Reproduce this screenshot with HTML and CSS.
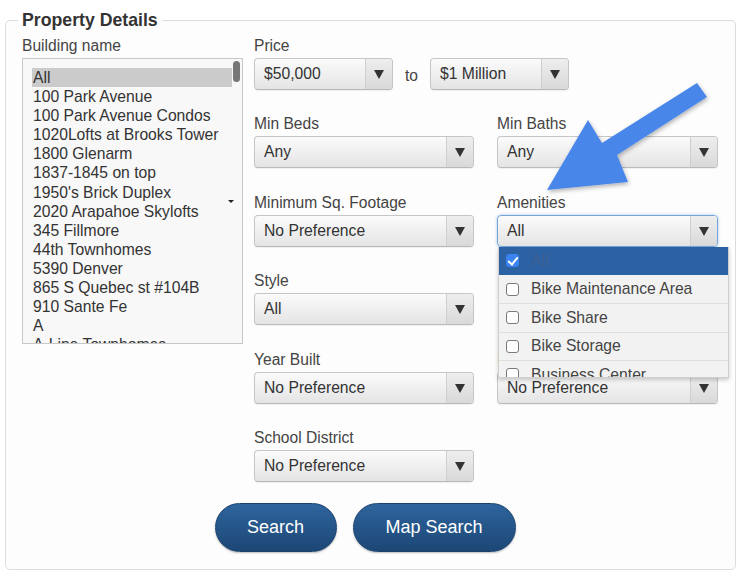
FILE: index.html
```html
<!DOCTYPE html>
<html lang="en">
<head>
    <meta charset="UTF-8">
    <meta name="viewport" content="width=device-width, initial-scale=1.0">
    <title>Property Search</title>
    <link rel="stylesheet" href="styles.css">
</head>
<body>
    <form class="search-form">
        <fieldset class="details">
            <legend>Property Details</legend>
            <div class="details-body">
                <div class="field building">
                    <label>Building name</label>
                    <div class="listbox">
                        <ul class="listbox-items">
                            <li class="selected">All</li>
                            <li>100 Park Avenue</li>
                            <li>100 Park Avenue Condos</li>
                            <li>1020Lofts at Brooks Tower</li>
                            <li>1800 Glenarm</li>
                            <li>1837-1845 on top</li>
                            <li>1950's Brick Duplex</li>
                            <li>2020 Arapahoe Skylofts</li>
                            <li>345 Fillmore</li>
                            <li>44th Townhomes</li>
                            <li>5390 Denver</li>
                            <li>865 S Quebec st #104B</li>
                            <li>910 Sante Fe</li>
                            <li>A</li>
                            <li>A-Line Townhomes</li>
                        </ul>
                        <span class="scroll-thumb"></span>
                        <span class="cursor-caret"></span>
                    </div>
                </div>

                <div class="field-grid">
                    <div class="field price">
                        <label>Price</label>
                        <div class="price-range">
                            <div class="select price-select"><span class="select-value">$50,000</span><span class="select-caret"></span></div>
                            <span class="to">to</span>
                            <div class="select price-select"><span class="select-value">$1 Million</span><span class="select-caret"></span></div>
                        </div>
                    </div>

                    <div class="field">
                        <label>Min Beds</label>
                        <div class="select"><span class="select-value">Any</span><span class="select-caret"></span></div>
                    </div>
                    <div class="field">
                        <label>Min Baths</label>
                        <div class="select"><span class="select-value">Any</span><span class="select-caret"></span></div>
                    </div>

                    <div class="field">
                        <label>Minimum Sq. Footage</label>
                        <div class="select"><span class="select-value">No Preference</span><span class="select-caret"></span></div>
                    </div>
                    <div class="field amenities">
                        <label>Amenities</label>
                        <div class="select focused"><span class="select-value">All</span><span class="select-caret"></span></div>
                        <ul class="dropdown">
                            <li class="checked"><span class="checkbox"></span>All</li>
                            <li><span class="checkbox"></span>Bike Maintenance Area</li>
                            <li><span class="checkbox"></span>Bike Share</li>
                            <li><span class="checkbox"></span>Bike Storage</li>
                            <li><span class="checkbox"></span>Business Center</li>
                        </ul>
                    </div>

                    <div class="field">
                        <label>Style</label>
                        <div class="select"><span class="select-value">All</span><span class="select-caret"></span></div>
                    </div>
                    <div class="field"></div>

                    <div class="field">
                        <label>Year Built</label>
                        <div class="select"><span class="select-value">No Preference</span><span class="select-caret"></span></div>
                    </div>
                    <div class="field">
                        <label>Parking</label>
                        <div class="select"><span class="select-value">No Preference</span><span class="select-caret"></span></div>
                    </div>

                    <div class="field">
                        <label>School District</label>
                        <div class="select"><span class="select-value">No Preference</span><span class="select-caret"></span></div>
                    </div>
                </div>
            </div>

            <div class="actions">
                <button type="button" class="btn">Search</button>
                <button type="button" class="btn btn-map">Map Search</button>
            </div>
        </fieldset>
    </form>

    <!-- annotation arrow drawn over the form -->
    <svg class="callout-arrow" width="746" height="577" viewBox="0 0 746 577">
        <defs>
            <filter id="arrow-shadow" x="-20%" y="-20%" width="140%" height="140%">
                <feDropShadow dx="1" dy="2" stdDeviation="2" flood-color="#000" flood-opacity="0.3"/>
            </filter>
        </defs>
        <polygon points="547,190 588,120 602,143 697,83 707,97 617,155 628,182" fill="#4a86ea" filter="url(#arrow-shadow)"/>
    </svg>
</body>
</html>
```

FILE: styles.css
```css
* {
    box-sizing: border-box;
}
body {
    margin: 0;
    background: #fff;
    font-family: "Liberation Sans", Arial, Helvetica, sans-serif;
    color: #333;
    position: relative;
    width: 746px;
    height: 577px;
    overflow: hidden;
}
.search-form {
    margin: 0;
}
.details {
    margin: 10px 10px 0 5px;
    padding: 6px 16px 17px 16px;
    border: 1px solid #dcdcdc;
    border-radius: 5px;
    background: #fdfdfd;
    min-width: 0;
}
.details legend {
    font-size: 17.7px;
    line-height: 21px;
    font-weight: bold;
    color: #333;
    padding: 0 4px;
    margin-left: -4px;
}
.details-body {
    display: flex;
    gap: 11px;
}
.field {
    display: flex;
    flex-direction: column;
    position: relative;
}
.field label {
    font-size: 15.6px;
    line-height: 18px;
    color: #444;
    margin-bottom: 3px;
}
.building {
    width: 221px;
}

/* building listbox */
.listbox {
    position: relative;
    height: 286px;
    border: 1px solid #c8c8c8;
    background: #f8f8f8;
    overflow: hidden;
}
.listbox-items {
    list-style: none;
    margin: 0;
    padding: 9px 10px 0 9px;
}
.listbox-items li {
    font-size: 15.7px;
    line-height: 19.1px;
    padding-left: 1px;
    color: #333;
    white-space: nowrap;
}
.listbox-items li.selected {
    background: #cbcbcb;
}
.scroll-thumb {
    position: absolute;
    top: 2px;
    right: 2px;
    width: 7px;
    height: 21px;
    border-radius: 4px;
    background: #777;
}
.cursor-caret {
    position: absolute;
    top: 141px;
    left: 205px;
    border-left: 3px solid transparent;
    border-right: 3px solid transparent;
    border-top: 3px solid #222;
}

/* right side grid */
.field-grid {
    display: grid;
    grid-template-columns: 220px 221px;
    column-gap: 23px;
    row-gap: 25.4px;
    align-content: start;
}
.price {
    grid-column: 1 / 3;
}
.price-range {
    display: flex;
    align-items: center;
}
.price-select {
    width: 139px;
}
.to {
    font-size: 15.6px;
    color: #444;
    width: 37px;
    text-align: center;
    padding-top: 3px;
}

/* select boxes */
.select {
    display: flex;
    height: 32px;
    border: 1px solid #c6c6c6;
    border-bottom-color: #b9b9b9;
    border-radius: 4px;
    background: linear-gradient(#fbfbfb, #e4e4e4);
    box-shadow: 0 1px 1px rgba(0, 0, 0, 0.06);
    overflow: hidden;
}
.select-value {
    flex: 1;
    font-size: 15.7px;
    line-height: 30px;
    padding-left: 9px;
    color: #333;
    white-space: nowrap;
}
.select-caret {
    width: 27px;
    border-left: 1px solid #cfcfcf;
    background: linear-gradient(#eeeeee, #d9d9d9);
    position: relative;
}
.select-caret::after {
    content: "";
    position: absolute;
    top: 11px;
    left: 8px;
    border-left: 5px solid transparent;
    border-right: 5px solid transparent;
    border-top: 9px solid #333;
}
.select.focused {
    border-color: #74a6dc;
    box-shadow: 0 0 3px rgba(80, 140, 210, 0.5);
}

/* amenities dropdown */
.dropdown {
    position: absolute;
    top: 53px;
    left: 1px;
    width: 231px;
    height: 131px;
    margin: 0;
    padding: 0;
    list-style: none;
    overflow: hidden;
    background: #f2f2f2;
    border: 1px solid #cfcfcf;
    border-top: none;
    box-shadow: 0 2px 4px rgba(0, 0, 0, 0.2);
    z-index: 5;
}
.dropdown li {
    display: flex;
    align-items: center;
    height: 28.6px;
    padding-left: 7px;
    font-size: 15.7px;
    color: #444;
    border-bottom: 1px solid #e0e0e0;
    white-space: nowrap;
}
.dropdown li.checked {
    background: #2c62a4;
    color: #3d5f92;
    border-bottom-color: #2c62a4;
}
.checkbox {
    width: 13px;
    height: 13px;
    margin-right: 12px;
    border: 1px solid #7a7a7a;
    border-radius: 3px;
    background: #fff;
    position: relative;
}
.checked .checkbox {
    background: #3a82f0;
    border-color: #3a82f0;
}
.checked .checkbox::after {
    content: "";
    position: absolute;
    left: 3px;
    top: 0px;
    width: 4px;
    height: 8px;
    border-right: 2px solid #fff;
    border-bottom: 2px solid #fff;
    transform: rotate(40deg);
}

/* buttons */
.actions {
    display: flex;
    justify-content: center;
    gap: 16px;
    margin-top: 21px;
    padding-right: 11px;
}
.btn {
    height: 49px;
    width: 122px;
    border: 1px solid #1b416d;
    border-radius: 25px;
    background: linear-gradient(#2e649d, #1c4775);
    color: #fff;
    font-family: "Liberation Sans", Arial, Helvetica, sans-serif;
    font-size: 18px;
    cursor: pointer;
    box-shadow: 0 1px 2px rgba(0, 0, 0, 0.25);
}
.btn-map {
    width: 163px;
}

.callout-arrow {
    position: absolute;
    left: 0;
    top: 0;
    pointer-events: none;
    z-index: 10;
}
```
